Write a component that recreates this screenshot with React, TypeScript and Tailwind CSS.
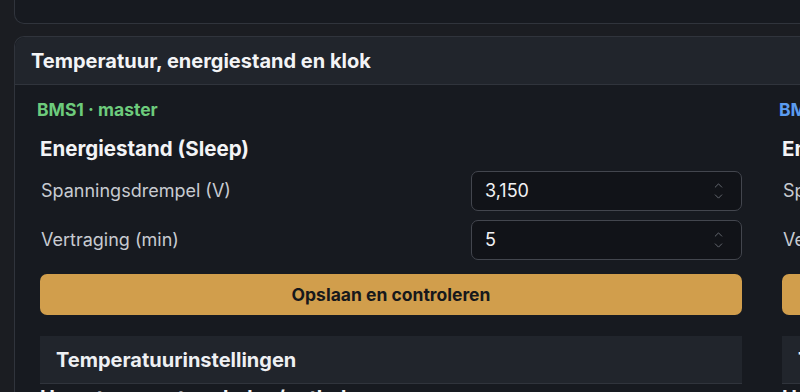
import { ChevronUp, ChevronDown } from 'lucide-react';

interface Field {
  label: string;
  value: string;
}

const fields: Field[] = [
  { label: 'Spanningsdrempel (V)', value: '3,150' },
  { label: 'Vertraging (min)', value: '5' },
];

function NumberInput({ value }: { value: string }) {
  return (
    <div className="flex h-[40px] w-[271px] items-center justify-between rounded-[7px] border border-[#43464e] bg-[#111318] pl-[13px] pr-[16px]">
      <span className="text-[18px] leading-[24px] text-[#f1f2f4]">{value}</span>
      <div className="flex flex-col items-center text-[#6b6f77]">
        <ChevronUp size={13} strokeWidth={1.7} className="-mb-[2px]" />
        <ChevronDown size={13} strokeWidth={1.7} />
      </div>
    </div>
  );
}

function BmsColumn({ name, tone }: { name: string; tone: 'green' | 'blue' }) {
  return (
    <div className="flex w-[708px] shrink-0 flex-col">
      <div
        className={
          tone === 'green'
            ? 'h-[20px] text-[17.5px] font-bold leading-[20px] text-[#6dcb7c]'
            : 'h-[20px] text-[17.5px] font-bold leading-[20px] text-[#5b9cf0]'
        }
      >
        {name}
      </div>
      <div className="flex flex-col px-[3px]">
        <h3 className="mt-[17px] text-[20.5px] font-bold leading-[24px] text-[#f3f4f6]">Energiestand (Sleep)</h3>
        <div className="mt-[10px] flex flex-col gap-[9px]">
          {fields.map((f) => (
            <div key={f.label} className="flex items-center justify-between pl-[1px]">
              <span className="text-[18px] leading-[24px] text-[#c8cbd1]">{f.label}</span>
              <NumberInput value={f.value} />
            </div>
          ))}
        </div>
        <button className="mt-[14px] h-[41px] w-full rounded-[7px] bg-[#d19e4c] text-[17.5px] font-bold leading-[24px] text-[#17181b]">
          Opslaan en controleren
        </button>
        <div className="mt-[21px] flex h-[48px] items-center border-b border-[#30343c] bg-[#21252c] pl-[16px]">
          <h4 className="text-[20px] font-bold leading-[24px] text-[#eef0f3]">Temperatuurinstellingen</h4>
        </div>
        <div className="mt-[2px] text-[20px] font-bold leading-[24px] text-[#f3f4f6]">Hoge temperatuur laden/ontladen</div>
      </div>
    </div>
  );
}

export default function App() {
  return (
    <div
      className="h-[392px] w-[800px] overflow-hidden bg-[#1b1d22] pl-[14px]"
      style={{ fontFamily: 'Inter, "Noto Sans", sans-serif' }}
    >
      <div className="h-[24px] w-[1560px] rounded-b-[10px] border-x border-b border-[#30343c] bg-[#171a20]" />
      <div className="mt-[12px] w-[1560px] rounded-t-[10px] border-x border-t border-[#30343c] bg-[#171a20]">
        <div className="flex h-[48px] items-center rounded-t-[10px] border-b border-[#30343c] bg-[#21252c] pl-[16px]">
          <h2 className="text-[20px] font-bold leading-[24px] text-[#f3f4f6]">Temperatuur, energiestand en klok</h2>
        </div>
        <div className="flex gap-[34px] pl-[22px] pt-[15px]">
          <BmsColumn name="BMS1 · master" tone="green" />
          <BmsColumn name="BMS2 · slave" tone="blue" />
        </div>
      </div>
    </div>
  );
}
